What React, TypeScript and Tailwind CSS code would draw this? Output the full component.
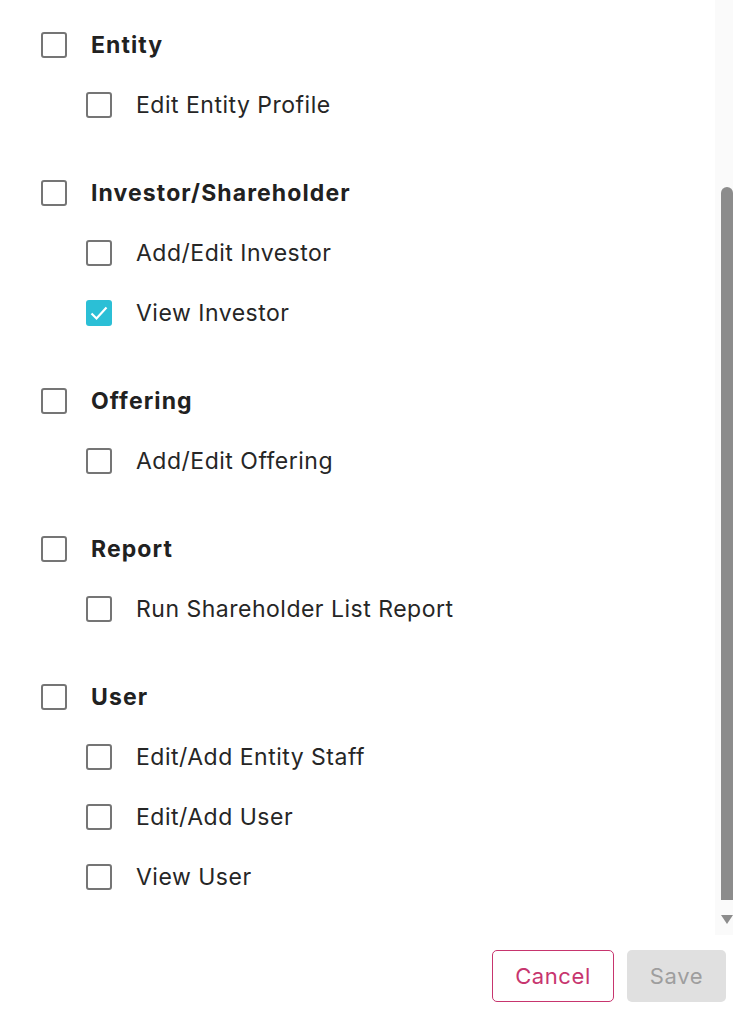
import React from 'react';

type Group = { title: string; items: { label: string; checked?: boolean }[] };

const groups: Group[] = [
  { title: 'Entity', items: [{ label: 'Edit Entity Profile' }] },
  {
    title: 'Investor/Shareholder',
    items: [{ label: 'Add/Edit Investor' }, { label: 'View Investor', checked: true }],
  },
  { title: 'Offering', items: [{ label: 'Add/Edit Offering' }] },
  { title: 'Report', items: [{ label: 'Run Shareholder List Report' }] },
  {
    title: 'User',
    items: [{ label: 'Edit/Add Entity Staff' }, { label: 'Edit/Add User' }, { label: 'View User' }],
  },
];

function Box({ checked }: { checked?: boolean }) {
  if (checked) {
    return (
      <span className="flex h-[26px] w-[26px] shrink-0 items-center justify-center rounded-[3px] bg-[#2bbfd6]">
        <svg viewBox="0 0 24 24" className="h-[24px] w-[24px]" fill="none" stroke="white" strokeWidth="2.2">
          <path d="M4.5 12.5l5 5L19.5 6.5" />
        </svg>
      </span>
    );
  }
  return <span className="h-[26px] w-[26px] shrink-0 rounded-[3px] border-2 border-[#757575] bg-white" />;
}

export default function App() {
  return (
    <div
      className="flex h-[1012px] w-[733px] flex-col bg-white text-[#212121]"
      style={{ fontFamily: 'Inter, "Noto Sans", sans-serif' }}
    >
      <div className="flex h-[935px]">
        <div className="flex flex-1 flex-col gap-[28px] pl-[41px] pt-[15px]">
          {groups.map((g) => (
            <div key={g.title} className="flex flex-col">
              <div className="flex h-[60px] items-center gap-[24px]">
                <Box />
                <span className="text-[23px] font-bold tracking-[1.1px]">{g.title}</span>
              </div>
              {g.items.map((it) => (
                <div key={it.label} className="flex h-[60px] items-center gap-[24px] pl-[45px]">
                  <Box checked={it.checked} />
                  <span className="text-[23px] tracking-[0.5px] text-[#262626]">{it.label}</span>
                </div>
              ))}
            </div>
          ))}
        </div>
        <div className="flex w-[18px] flex-col items-end bg-[#fafafa]">
          <div className="mt-[187px] h-[713px] w-[12px] rounded-t-full rounded-b-[6px] bg-[#8c8c8c]" />
          <div className="mt-[15px] h-0 w-0 border-x-[6px] border-t-[9px] border-x-transparent border-t-[#8c8c8c]" />
        </div>
      </div>
      <div className="flex flex-1 items-start justify-end gap-[13px] pr-[7px] pt-[15px]">
        <button className="h-[52px] w-[122px] rounded-[5px] border border-[#c7356e] text-[22px] tracking-[0.6px] text-[#c7356e]">
          Cancel
        </button>
        <button className="h-[52px] w-[99px] rounded-[5px] bg-[#e0e0e0] text-[22px] tracking-[0.6px] text-[#9e9e9e]">
          Save
        </button>
      </div>
    </div>
  );
}
